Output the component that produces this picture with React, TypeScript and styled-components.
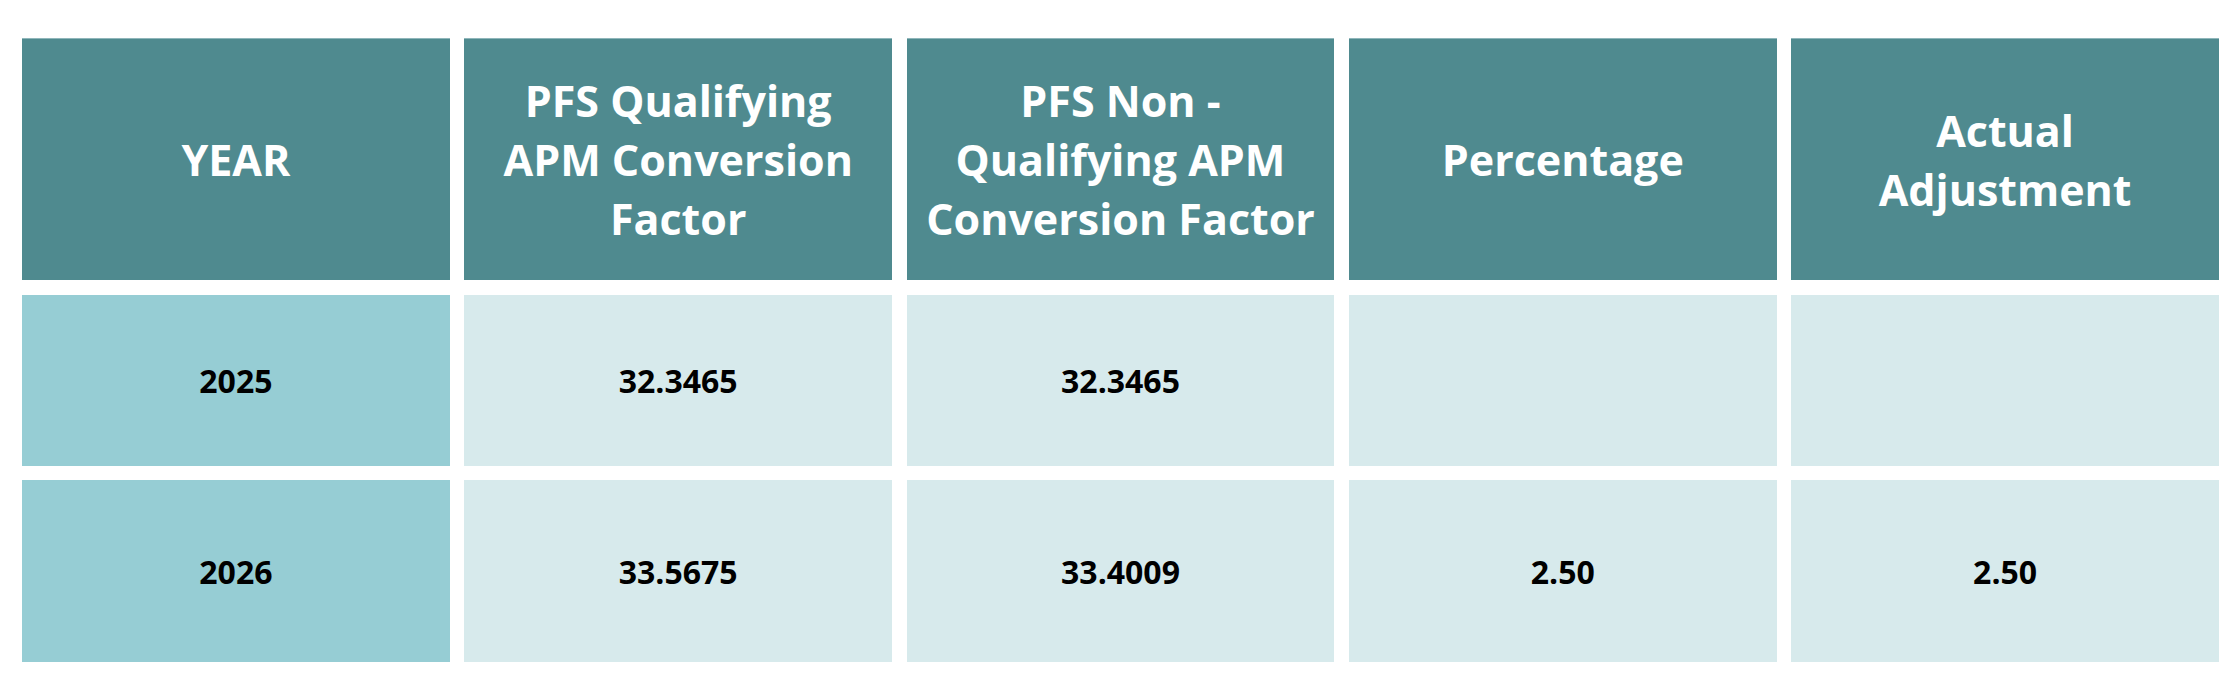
import React from "react";
import styled, { createGlobalStyle } from "styled-components";

const Global = createGlobalStyle`
  html, body { margin: 0; padding: 0; background: #ffffff; }
  body { font-family: "Open Sans", "Noto Sans", sans-serif; }
`;

const Page = styled.div`
  padding: 38px 21px 0 22px;
  width: 2240px;
  box-sizing: border-box;
`;

const Table = styled.div`
  display: grid;
  grid-template-columns: repeat(5, 1fr);
  grid-template-rows: 242px 171px 182px;
  column-gap: 14.5px;
  row-gap: 14.5px;
`;

const HeadCell = styled.div`
  display: flex;
  align-items: center;
  justify-content: center;
  text-align: center;
  background: #4f8a8f;
  border-top: 1px solid #8fb6ba;
  color: #ffffff;
  font-weight: 700;
  font-size: 43px;
  line-height: 59px;
  padding: 0 16px;
`;

const BodyCell = styled.div<{ $year?: boolean }>`
  display: flex;
  align-items: center;
  justify-content: center;
  text-align: center;
  background: ${(p) => (p.$year ? "#96cdd4" : "#d7eaec")};
  color: #000000;
  font-weight: 700;
  font-size: 32px;
`;

const headers = [
  "YEAR",
  "PFS Qualifying APM Conversion Factor",
  "PFS Non - Qualifying APM Conversion Factor",
  "Percentage",
  "Actual Adjustment",
];

const rows = [
  ["2025", "32.3465", "32.3465", "", ""],
  ["2026", "33.5675", "33.4009", "2.50", "2.50"],
];

export default function App() {
  return (
    <Page>
      <Global />
      <Table>
        {headers.map((h) => (
          <HeadCell key={h}>{h}</HeadCell>
        ))}
        {rows.map((r, i) =>
          r.map((c, j) => (
            <BodyCell key={`${i}-${j}`} $year={j === 0}>
              {c}
            </BodyCell>
          ))
        )}
      </Table>
    </Page>
  );
}
